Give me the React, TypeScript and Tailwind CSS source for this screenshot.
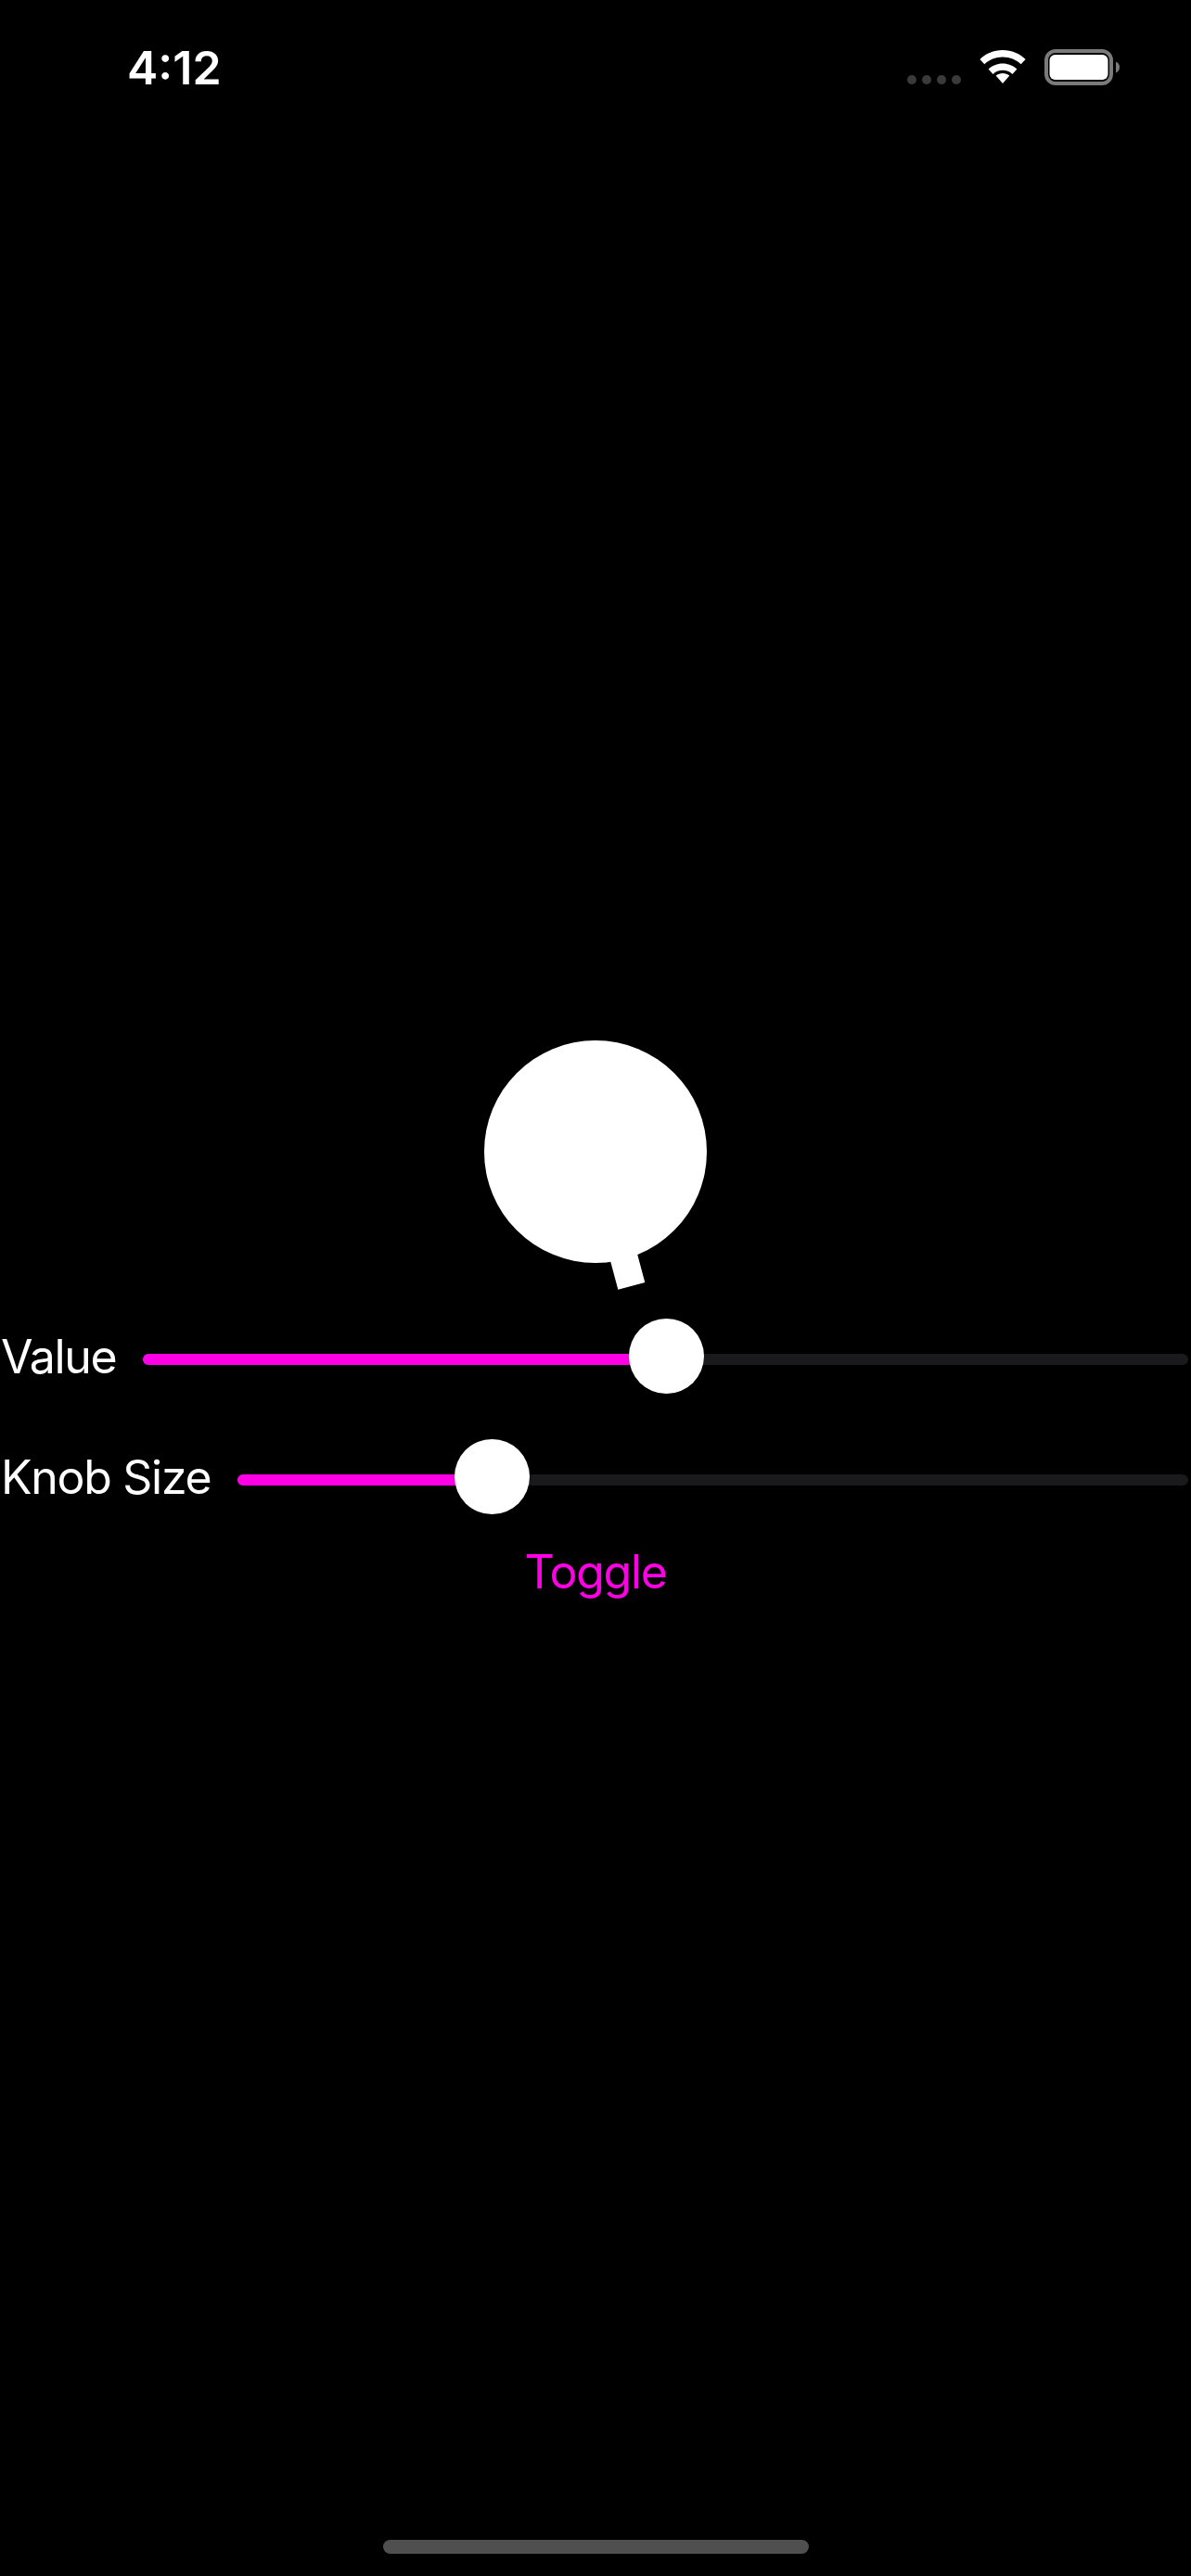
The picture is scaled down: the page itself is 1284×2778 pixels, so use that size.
function WifiIcon() {
  return (
    <svg width="50" height="38" viewBox="0 0 50 38" fill="none" className="block">
      <path d="M25 37 17.6 28.6C21.8 25.2 28.2 25.2 32.4 28.6Z" fill="#fff" />
      <path d="M25 15.4C31 15.4 36.4 17.7 40.4 21.6L35.4 26.9C32.6 24.3 29 22.8 25 22.8S17.4 24.3 14.6 26.9L9.6 21.6C13.6 17.7 19 15.4 25 15.4Z" fill="#fff" />
      <path d="M25 1C34.6 1 43.3 4.8 49.6 10.9L44.7 16.2C39.6 11.4 32.7 8.4 25 8.4S10.4 11.4 5.3 16.2L.4 10.9C6.7 4.8 15.4 1 25 1Z" fill="#fff" />
    </svg>
  );
}

function BatteryIcon() {
  return (
    <svg width="82" height="39" viewBox="0 0 82 39" fill="none" className="block">
      <rect x="2" y="2" width="70" height="35" rx="10" stroke="#7a7a7a" strokeWidth="4" />
      <rect x="5.5" y="6" width="63" height="27" rx="6" fill="#fff" />
      <path d="M77 13.5C79.5 14.5 81 16.8 81 19.5S79.5 24.5 77 25.5Z" fill="#7a7a7a" />
    </svg>
  );
}

function StatusBar() {
  return (
    <div className="flex h-[122px] items-start justify-between pl-[137px] pr-[76px]">
      <span className="mt-[44px] text-[50px] leading-[58px] font-semibold text-white">4:12</span>
      <div className="mt-[53px] flex items-start">
        <div className="mt-[28px] flex gap-[6px]">
          <div className="h-[10px] w-[10px] rounded-full bg-[#3a3a3a]" />
          <div className="h-[10px] w-[10px] rounded-full bg-[#3a3a3a]" />
          <div className="h-[10px] w-[10px] rounded-full bg-[#3a3a3a]" />
          <div className="h-[10px] w-[10px] rounded-full bg-[#3a3a3a]" />
        </div>
        <div className="ml-[20px]">
          <WifiIcon />
        </div>
        <div className="ml-[20px]">
          <BatteryIcon />
        </div>
      </div>
    </div>
  );
}

function Knob() {
  return (
    <div className="relative h-[240px] w-[240px] rounded-full bg-white">
      {/* indicator tick, pivots around the middle of the knob */}
      <div className="absolute top-[120px] left-[105px] h-[150px] w-[30px] origin-top rotate-[-15deg] bg-white" />
    </div>
  );
}

function Slider({ fill, thumb }: { fill: string; thumb: string }) {
  return (
    <div className="relative h-[81px] flex-1">
      <div className="absolute top-[38px] right-0 left-0 h-[12px] rounded-full bg-[#1a1a1c]" />
      <div className={`absolute top-[38px] left-0 h-[12px] rounded-l-full bg-[#ff00e6] ${fill}`} />
      <div className={`absolute top-0 h-[81px] w-[81px] rounded-full bg-white shadow-[0_0_3px_rgba(0,0,0,0.2)] ${thumb}`} />
    </div>
  );
}

export default function App() {
  return (
    <div className="relative flex h-[2778px] w-[1284px] flex-col overflow-hidden bg-black font-['Inter',sans-serif]">
      <StatusBar />
      <div className="flex flex-col items-center pt-[1000px]">
        <Knob />
        <div className="mt-[60px] flex w-full items-center pr-[3px] pl-[1px]">
          <span className="w-[153px] text-[50px] leading-[60px] tracking-[-1.3px] text-white">Value</span>
          <Slider fill="w-[565px]" thumb="left-[524px]" />
        </div>
        <div className="mt-[49px] flex w-full items-center pr-[3px] pl-[1px]">
          <span className="w-[255px] text-[50px] leading-[60px] tracking-[-1.3px] text-white">Knob Size</span>
          <Slider fill="w-[274px]" thumb="left-[234px]" />
        </div>
        <span className="mt-[32px] text-[50px] leading-[60px] tracking-[-1.3px] text-[#ff00e6]">Toggle</span>
      </div>
      <div className="mt-auto mb-[24px] h-[15px] w-[459px] self-center rounded-full bg-[#4f4f4f]" />
    </div>
  );
}
